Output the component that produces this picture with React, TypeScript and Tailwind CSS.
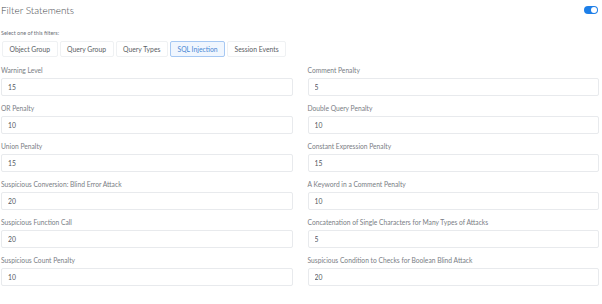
import React from "react";

const tabs = ["Object Group", "Query Group", "Query Types", "SQL Injection", "Session Events"];

const left = [
  { label: "Warning Level", value: "15" },
  { label: "OR Penalty", value: "10" },
  { label: "Union Penalty", value: "15" },
  { label: "Suspicious Conversion: Blind Error Attack", value: "20" },
  { label: "Suspicious Function Call", value: "20" },
  { label: "Suspicious Count Penalty", value: "10" },
];

const right = [
  { label: "Comment Penalty", value: "5" },
  { label: "Double Query Penalty", value: "10" },
  { label: "Constant Expression Penalty", value: "15" },
  { label: "A Keyword in a Comment Penalty", value: "10" },
  { label: "Concatenation of Single Characters for Many Types of Attacks", value: "5" },
  { label: "Suspicious Condition to Checks for Boolean Blind Attack", value: "20" },
];

function Field({ label, value }: { label: string; value: string }) {
  return (
    <div className="flex flex-col">
      <label className="h-[15px] text-[6.7px] leading-[15px] text-[#7a7e85]">{label}</label>
      <input
        readOnly
        value={value}
        className="h-[18px] w-full rounded-[2px] border border-[#e8eaed] bg-white px-[6px] text-[6.8px] text-[#55595f] outline-none"
      />
    </div>
  );
}

export default function App() {
  return (
    <div className="h-[304px] w-[602px] overflow-hidden bg-white" style={{ fontFamily: 'Lato, "Liberation Sans", sans-serif' }}>
      <div className="flex items-center justify-between pl-[1px] pr-[4px] pt-[3px]">
        <h1 className="text-[10px] font-light leading-[14px] text-[#45484d]">Filter Statements</h1>
        <div className="flex h-[8px] w-[14px] items-center justify-end rounded-full bg-[#1e7fe8] px-[1px]">
          <div className="h-[6px] w-[6px] rounded-full bg-white" />
        </div>
      </div>

      <div className="mt-[12px] pl-[1px] text-[5.5px] leading-[8px] text-[#6d7178]">Select one of this filters:</div>

      <div className="mt-[4px] flex gap-[2px] pl-[2px]">
        {tabs.map((t) => {
          const active = t === "SQL Injection";
          return (
            <button
              key={t}
              className={
                active
                  ? "h-[16px] rounded-[2px] border border-[#a6c8f3] bg-[#f0f6fe] px-[6.5px] text-[6.8px] text-[#4a86d4]"
                  : "h-[16px] rounded-[2px] border border-[#eff1f3] bg-white px-[6.5px] text-[6.8px] text-[#5a5e64]"
              }
            >
              {t}
            </button>
          );
        })}
      </div>

      <div className="mt-[6px] grid grid-cols-2 gap-x-[15px] gap-y-[5px] pl-[1px] pr-[3px]">
        {left.map((f, i) => (
          <React.Fragment key={i}>
            <Field label={f.label} value={f.value} />
            <Field label={right[i].label} value={right[i].value} />
          </React.Fragment>
        ))}
      </div>
    </div>
  );
}
